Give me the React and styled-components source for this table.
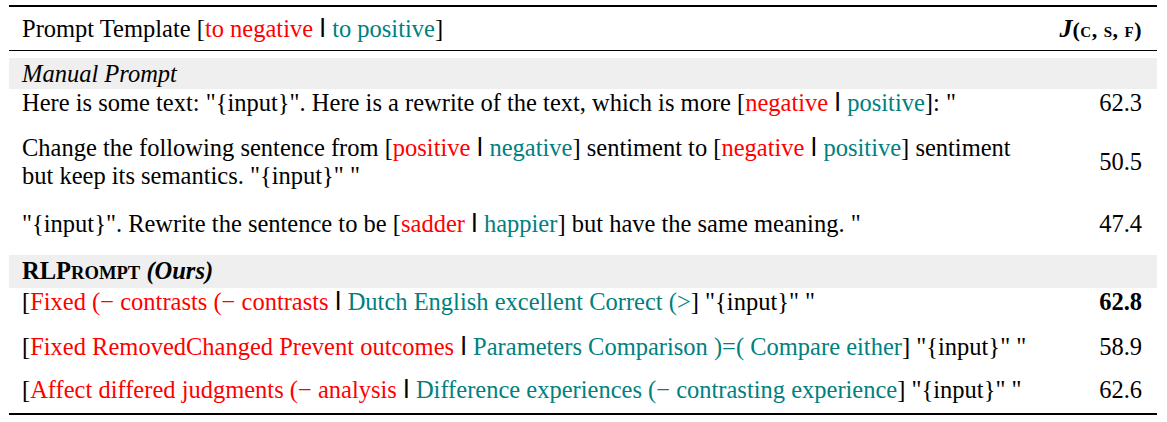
import React from 'react';
import styled, { createGlobalStyle } from 'styled-components';

const GlobalStyle = createGlobalStyle`
  body {
    margin: 0;
    background: #ffffff;
    font-family: "Liberation Serif", "Times New Roman", serif;
    color: #000;
  }
`;

const Page = styled.div`
  padding: 5px 10px 0 9px;
`;

const Table = styled.table`
  width: 1148px;
  border-collapse: collapse;
  font-size: 24.5px;
  line-height: 28px;
  border-top: 2px solid #000;
  border-bottom: 2px solid #000;
`;

const HeadRow = styled.tr`
  border-bottom: 1px solid #000;
`;

const HeadCell = styled.th`
  height: 43px;
  padding: 0 0 0 13px;
  font-weight: normal;
  text-align: left;
  vertical-align: middle;
`;

const ScoreHead = styled.th`
  padding: 0 15px 0 0;
  text-align: right;
  vertical-align: middle;
  white-space: nowrap;
`;

const Spacer = styled.tr`
  height: 7px;
`;

const SectionRow = styled.tr`
  background: #efefef;
`;

const SectionCell = styled.td`
  height: 31px;
  padding: 0 0 0 13px;
  line-height: 31px;
`;

const Cell = styled.td`
  padding: 0 0 ${(p) => p.$gap}px 13px;
  vertical-align: top;
  white-space: nowrap;
`;

const Score = styled.td`
  padding: 0 15px ${(p) => p.$gap}px 0;
  text-align: right;
  vertical-align: middle;
  font-weight: ${(p) => (p.$best ? 'bold' : 'normal')};
`;

const Neg = styled.span`
  color: #ff0000;
`;

const Pos = styled.span`
  color: #008080;
`;

const Bar = styled.span`
  font-family: "Liberation Sans", Arial, sans-serif;
  font-size: 26px;
  line-height: 0;
  color: #000;
`;

const J = styled.span`
  font-weight: bold;
  font-style: italic;
  font-size: 26px;
  line-height: 0;
`;

const Sub = styled.span`
  font-weight: bold;
  font-size: 22px;
  line-height: 0;
  letter-spacing: 0.5px;
`;

const Small = styled.span`
  font-size: 15px;
`;

const Method = styled.span`
  font-weight: bold;
`;

const Caps = styled.span`
  font-size: 0.76em;
`;

const Ours = styled.span`
  font-weight: bold;
  font-style: italic;
`;

const Choice = ({ neg, pos }) => (
  <>
    [<Neg>{neg}</Neg> <Bar>ǀ</Bar> <Pos>{pos}</Pos>]
  </>
);

const rlRows = [
  { neg: 'Fixed (− contrasts (− contrasts', pos: 'Dutch English excellent Correct (>', score: '62.8', best: true, gap: 17 },
  { neg: 'Fixed RemovedChanged Prevent outcomes', pos: 'Parameters Comparison )=( Compare either', score: '58.9', gap: 15 },
  { neg: 'Affect differed judgments (− analysis', pos: 'Difference experiences (− contrasting experience', score: '62.6', gap: 9 },
];

export default function App() {
  return (
    <Page>
      <GlobalStyle />
      <Table>
        <tbody>
          <HeadRow>
            <HeadCell>
              Prompt Template <Choice neg="to negative" pos="to positive" />
            </HeadCell>
            <ScoreHead>
              <J>J</J>
              <Sub>
                (<Small>C</Small>, <Small>S</Small>, <Small>F</Small>)
              </Sub>
            </ScoreHead>
          </HeadRow>
          <Spacer><td colSpan={2} /></Spacer>
          <SectionRow>
            <SectionCell colSpan={2}><i>Manual Prompt</i></SectionCell>
          </SectionRow>
          <tr>
            <Cell $gap={17}>
              Here is some text: "{'{input}'}". Here is a rewrite of the text, which is more{' '}
              <Choice neg="negative" pos="positive" />: "
            </Cell>
            <Score $gap={17}>62.3</Score>
          </tr>
          <tr>
            <Cell $gap={20}>
              Change the following sentence from <Choice neg="positive" pos="negative" /> sentiment to{' '}
              <Choice neg="negative" pos="positive" /> sentiment
              <br />
              but keep its semantics. "{'{input}'}" "
            </Cell>
            <Score $gap={20}>50.5</Score>
          </tr>
          <tr>
            <Cell $gap={17}>
              "{'{input}'}". Rewrite the sentence to be <Choice neg="sadder" pos="happier" /> but have the
              same meaning. "
            </Cell>
            <Score $gap={17}>47.4</Score>
          </tr>
          <SectionRow>
            <SectionCell colSpan={2}>
              <Method>RLP<Caps>ROMPT</Caps></Method> <Ours>(Ours)</Ours>
            </SectionCell>
          </SectionRow>
          {rlRows.map((r, i) => (
            <tr key={i}>
              <Cell $gap={r.gap}>
                <Choice neg={r.neg} pos={r.pos} /> "{'{input}'}" "
              </Cell>
              <Score $gap={r.gap} $best={r.best}>{r.score}</Score>
            </tr>
          ))}
        </tbody>
      </Table>
    </Page>
  );
}
